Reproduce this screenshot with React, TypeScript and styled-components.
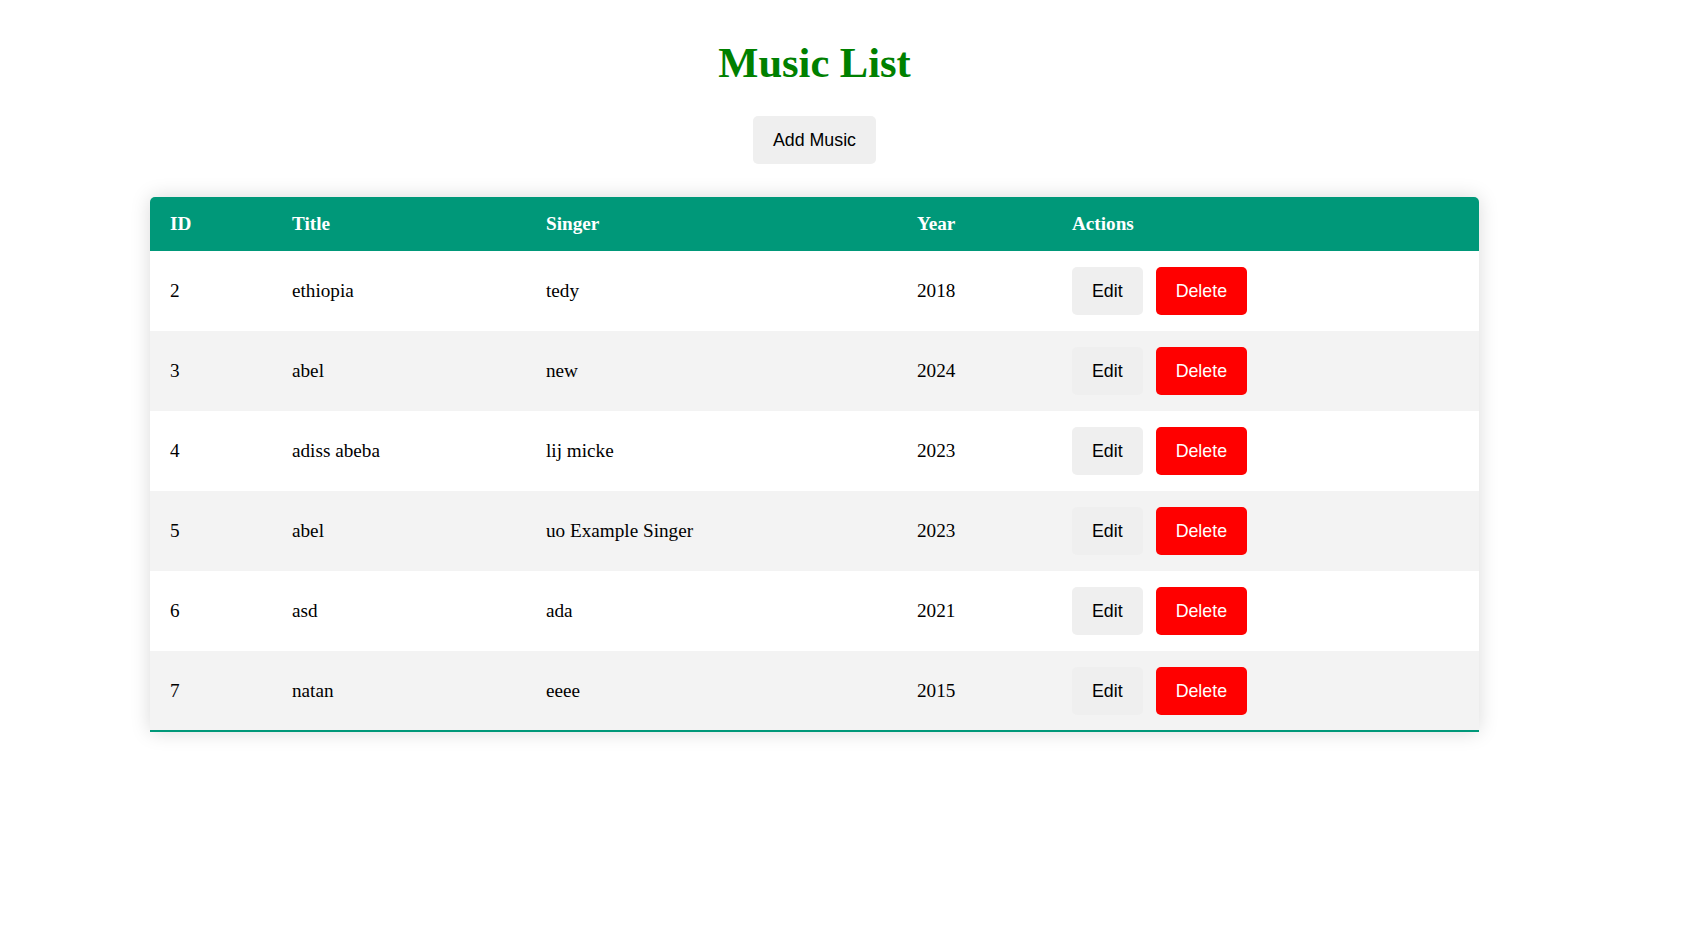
import React from "react";
import styled, { createGlobalStyle } from "styled-components";

const GlobalStyle = createGlobalStyle`
  html, body {
    margin: 0;
    padding: 0;
    background: #ffffff;
  }
  body {
    font-family: "Liberation Serif", "Times New Roman", serif;
    color: #000000;
  }
`;

const Page = styled.main`
  width: 1329px;
  margin: 0 0 0 150px;
  padding: 38px 0 60px;
  display: flex;
  flex-direction: column;
  align-items: center;
`;

const Title = styled.h1`
  margin: 0;
  font-family: "Liberation Serif", "Times New Roman", serif;
  font-weight: 700;
  font-size: 42.5px;
  line-height: normal;
  color: #008000;
`;

const Button = styled.button<{ $variant?: "plain" | "danger" }>`
  font-family: "Liberation Sans", Arial, sans-serif;
  font-size: 17.8px;
  line-height: 22px;
  padding: 13px 20px;
  border: none;
  border-radius: 5px;
  cursor: pointer;
  background: ${(p) => (p.$variant === "danger" ? "#ff0000" : "#efefef")};
  color: ${(p) => (p.$variant === "danger" ? "#ffffff" : "#000000")};
`;

const AddButton = styled(Button)`
  margin-top: 29px;
`;

const Table = styled.table`
  margin-top: 33px;
  width: 1329px;
  table-layout: fixed;
  border-collapse: separate;
  border-spacing: 0;
  font-family: "Liberation Serif", "Times New Roman", serif;
  font-size: 19.2px;
  box-shadow: 0 0 20px rgba(0, 0, 0, 0.15);
  border-radius: 5px 5px 0 0;
`;

const HeadRow = styled.tr`
  background: #009879;
  color: #ffffff;
`;

const Th = styled.th`
  padding: 16px 20px;
  text-align: left;
  font-weight: 700;
  line-height: normal;
  &:first-child {
    border-top-left-radius: 5px;
  }
  &:last-child {
    border-top-right-radius: 5px;
  }
`;

const BodyRow = styled.tr<{ $even: boolean; $last: boolean }>`
  background: ${(p) => (p.$even ? "#f3f3f3" : "#ffffff")};
  & > td {
    ${(p) => (p.$last ? "border-bottom: 2px solid #009879; padding-bottom: 15px;" : "")}
  }
`;

const Td = styled.td`
  padding: 16px 20px;
  vertical-align: middle;
  line-height: normal;
`;

const Actions = styled.div`
  display: flex;
  gap: 13px;
`;

const rows = [
  { id: 2, title: "ethiopia", singer: "tedy", year: 2018 },
  { id: 3, title: "abel", singer: "new", year: 2024 },
  { id: 4, title: "adiss abeba", singer: "lij micke", year: 2023 },
  { id: 5, title: "abel", singer: "uo Example Singer", year: 2023 },
  { id: 6, title: "asd", singer: "ada", year: 2021 },
  { id: 7, title: "natan", singer: "eeee", year: 2015 },
];

export default function App() {
  return (
    <>
      <GlobalStyle />
      <Page>
        <Title>Music List</Title>
        <AddButton>Add Music</AddButton>
        <Table>
          <colgroup>
            <col style={{ width: 122 }} />
            <col style={{ width: 254 }} />
            <col style={{ width: 371 }} />
            <col style={{ width: 155 }} />
            <col style={{ width: 427 }} />
          </colgroup>
          <thead>
            <HeadRow>
              <Th>ID</Th>
              <Th>Title</Th>
              <Th>Singer</Th>
              <Th>Year</Th>
              <Th>Actions</Th>
            </HeadRow>
          </thead>
          <tbody>
            {rows.map((r, i) => (
              <BodyRow key={r.id} $even={i % 2 === 1} $last={i === rows.length - 1}>
                <Td>{r.id}</Td>
                <Td>{r.title}</Td>
                <Td>{r.singer}</Td>
                <Td>{r.year}</Td>
                <Td>
                  <Actions>
                    <Button>Edit</Button>
                    <Button $variant="danger">Delete</Button>
                  </Actions>
                </Td>
              </BodyRow>
            ))}
          </tbody>
        </Table>
      </Page>
    </>
  );
}
